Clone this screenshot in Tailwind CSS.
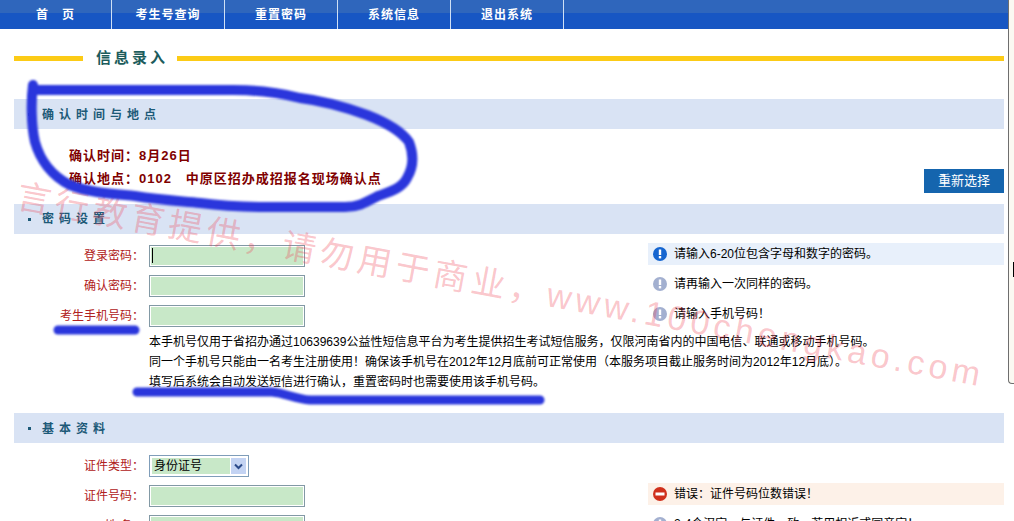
<!DOCTYPE html>
<html lang="zh-CN">
<head>
<meta charset="UTF-8">
<title>信息录入</title>
<script src="https://cdn.jsdelivr.net/npm/@tailwindcss/browser@4"></script>
</head>
<body class="bg-white">
<div class="relative w-[1014px] h-[521px] overflow-hidden bg-white text-[12px] text-black font-['Liberation_Sans','Noto_Sans_CJK_SC',sans-serif]">

	<!-- nav -->
	<div class="flex h-[29px] w-[1009px] bg-[linear-gradient(#2f66bc_0,#2f66bc_13px,#1756c3_13px)] text-white font-bold tracking-[1px]">
		<div class="w-[112px] flex items-center justify-center border-r border-[#cfe0f5] whitespace-pre">首   页</div>
		<div class="w-[113px] flex items-center justify-center border-r border-[#cfe0f5]">考生号查询</div>
		<div class="w-[113px] flex items-center justify-center border-r border-[#cfe0f5]">重置密码</div>
		<div class="w-[113px] flex items-center justify-center border-r border-[#cfe0f5]">系统信息</div>
		<div class="w-[113px] flex items-center justify-center border-r border-[#cfe0f5]">退出系统</div>
	</div>

	<div class="w-[1004px] pl-[14px]">
		<!-- page title -->
		<div class="flex items-center h-[20px] mt-[19px]">
			<div class="w-[69px] h-[5px] bg-[#fccb16]"></div>
			<div class="w-[94px] pl-[13px] text-[15px] font-bold tracking-[3px] text-[#1c5c5c]">信息录入</div>
			<div class="flex-1 h-[5px] bg-[#fccb16]"></div>
		</div>

		<!-- confirm -->
		<div class="flex items-center h-[30px] mt-[31px] pt-[1px] bg-[#d9e3f4] pl-[14px] font-bold tracking-[5px] text-[#1d5a78]">
			<span class="w-[3px] h-[3px] bg-[#1d5a78] mr-[11px]"></span>确认时间与地点
		</div>
		<div class="flex justify-between h-[75px]">
			<div class="pl-[55px] pt-[15px] text-[13px] leading-[23px] font-bold tracking-[1px] text-[#800000]">
				<div>确认时间：8月26日</div>
				<div class="whitespace-pre">确认地点：0102   中原区招办成招报名现场确认点</div>
			</div>
			<div class="w-[80px] h-[24px] mt-[40px] bg-[#1565ae] text-white text-[13px] flex items-center justify-center">重新选择</div>
		</div>

		<!-- password -->
		<div class="flex items-center h-[30px] bg-[#d9e3f4] pl-[14px] font-bold tracking-[5px] text-[#1d5a78]">
			<span class="w-[3px] h-[3px] bg-[#1d5a78] mr-[11px]"></span>密码设置
		</div>
		<div class="pt-[11px]">
			<div class="flex h-[30px]">
				<div class="w-[130px] h-[22px] leading-[22px] text-right text-[#b02020]">登录密码：</div>
				<div class="relative ml-[5px]">
					<input class="block w-[156px] h-[22px] border border-[#8299a5] bg-[#c8e8c8] shadow-[inset_0_0_0_1px_#fff]">
					<span class="absolute left-[3px] top-[3px] w-[1px] h-[15px] bg-black"></span>
				</div>
				<div class="flex items-center ml-auto w-[356px] h-[22px] -mt-[2px] pl-[5px] bg-[#e8f0fb]">
					<svg class="w-[14px] h-[14px] mr-[7px]" viewBox="0 0 14 14"><circle cx="7" cy="7" r="7" fill="#1565d0"/><rect x="5.8" y="2.5" width="2.4" height="5.5" fill="#fff"/><rect x="5.8" y="9" width="2.4" height="2.4" fill="#fff"/></svg>
					请输入6-20位包含字母和数字的密码。
				</div>
			</div>
			<div class="flex h-[30px]">
				<div class="w-[130px] h-[22px] leading-[22px] text-right text-[#b02020]">确认密码：</div>
				<input class="block ml-[5px] w-[156px] h-[22px] border border-[#8299a5] bg-[#c8e8c8] shadow-[inset_0_0_0_1px_#fff]">
				<div class="flex items-center ml-auto w-[356px] h-[22px] -mt-[2px] pl-[5px]">
					<svg class="w-[14px] h-[14px] mr-[7px]" viewBox="0 0 14 14"><circle cx="7" cy="7" r="7" fill="#a3b0d0"/><rect x="5.8" y="2.5" width="2.4" height="5.5" fill="#fff"/><rect x="5.8" y="9" width="2.4" height="2.4" fill="#fff"/></svg>
					请再输入一次同样的密码。
				</div>
			</div>
			<div class="flex h-[27px]">
				<div class="w-[130px] h-[22px] leading-[22px] text-right text-[#b02020]">考生手机号码：</div>
				<input class="block ml-[5px] w-[156px] h-[22px] border border-[#8299a5] bg-[#c8e8c8] shadow-[inset_0_0_0_1px_#fff]">
				<div class="flex items-center ml-auto w-[356px] h-[22px] -mt-[2px] pl-[5px]">
					<svg class="w-[14px] h-[14px] mr-[7px]" viewBox="0 0 14 14"><circle cx="7" cy="7" r="7" fill="#a3b0d0"/><rect x="5.8" y="2.5" width="2.4" height="5.5" fill="#fff"/><rect x="5.8" y="9" width="2.4" height="2.4" fill="#fff"/></svg>
					请输入手机号码！
				</div>
			</div>
			<div class="pl-[135px] leading-[20px] whitespace-nowrap">
				<div>本手机号仅用于省招办通过10639639公益性短信息平台为考生提供招生考试短信服务，仅限河南省内的中国电信、联通或移动手机号码。</div>
				<div>同一个手机号只能由一名考生注册使用！确保该手机号在2012年12月底前可正常使用（本服务项目截止服务时间为2012年12月底）。</div>
				<div>填写后系统会自动发送短信进行确认，重置密码时也需要使用该手机号码。</div>
			</div>
		</div>

		<!-- basic info -->
		<div class="flex items-center h-[30px] mt-[21px] pt-[1px] bg-[#d9e3f4] pl-[14px] font-bold tracking-[5px] text-[#1d5a78]">
			<span class="w-[3px] h-[3px] bg-[#1d5a78] mr-[11px]"></span>基本资料
		</div>
		<div class="pt-[12px]">
			<div class="flex h-[30px]">
				<div class="w-[130px] h-[22px] leading-[22px] text-right text-[#b02020]">证件类型：</div>
				<div class="flex items-center justify-between ml-[5px] w-[100px] h-[22px] border border-[#7f9db9] p-[2px]">
					<div class="w-[78px] h-[16px] leading-[16px] pl-[2px] bg-[#c8e8c8]">身份证号</div>
					<div class="flex items-center justify-center w-[15px] h-[16px] bg-[#c3d3f3]">
						<svg class="w-[9px] h-[7px]" viewBox="0 0 9 7"><path d="M1 1.5 4.5 5 8 1.5" fill="none" stroke="#2a4a8a" stroke-width="2"/></svg>
					</div>
				</div>
			</div>
			<div class="flex h-[30px]">
				<div class="w-[130px] h-[22px] leading-[22px] text-right text-[#b02020]">证件号码：</div>
				<input class="block ml-[5px] w-[156px] h-[22px] border border-[#8299a5] bg-[#c8e8c8] shadow-[inset_0_0_0_1px_#fff]">
				<div class="flex items-center ml-auto w-[356px] h-[22px] -mt-[2px] pl-[5px] bg-[#fdf1e8]">
					<svg class="w-[14px] h-[14px] mr-[7px]" viewBox="0 0 14 14"><circle cx="7" cy="7" r="7" fill="#d0301c"/><rect x="2.5" y="5.5" width="9" height="3" fill="#fff"/></svg>
					错误：证件号码位数错误！
				</div>
			</div>
			<div class="flex h-[30px]">
				<div class="w-[130px] h-[22px] leading-[22px] text-right text-[#b02020]">姓    名：</div>
				<input class="block ml-[5px] w-[156px] h-[22px] border border-[#8299a5] bg-[#c8e8c8] shadow-[inset_0_0_0_1px_#fff]">
				<div class="flex items-center ml-auto w-[356px] h-[22px] -mt-[2px] pl-[5px]">
					<svg class="w-[14px] h-[14px] mr-[7px]" viewBox="0 0 14 14"><circle cx="7" cy="7" r="7" fill="#a3b0d0"/><rect x="5.8" y="2.5" width="2.4" height="5.5" fill="#fff"/><rect x="5.8" y="9" width="2.4" height="2.4" fill="#fff"/></svg>
					2-4个汉字，与证件一致，若用相近或同音字！
				</div>
			</div>
		</div>
	</div>

	<!-- edge of the window behind -->
	<div class="absolute left-[1008px] top-0 w-[6px] h-[384px] bg-[#fbf9f2] border-l border-b border-[#6e6e6e] rounded-bl-[4px]">
		<div class="absolute left-[4px] top-[262px] w-[1px] h-[15px] bg-black"></div>
	</div>

	<!-- watermark -->
	<div class="absolute left-[21px] top-[176px] origin-top-left rotate-[10.5deg] whitespace-nowrap text-[34px] leading-[40px] tracking-[4.5px] text-[#f03c50]/30 pointer-events-none">言行教育提供，请勿用于商业，www.100chengkao.com</div>

	<!-- pen marks -->
	<svg class="absolute left-0 top-0 pointer-events-none blur-[1px]" width="1014" height="521" viewBox="0 0 1014 521" fill="none" stroke="#2a36dc" stroke-linecap="round" stroke-linejoin="round" stroke-width="10">
		<path d="M33 85 C31 100 31 125 35 142 C40 160 52 176 70 185 C90 193 115 194 135 196 C160 200 180 201 200 203 C230 207 250 207 267 207 L345 207 C360 207 368 201 378 196 C392 191 402 188 407 178 C413 168 414 155 409 142 C402 132 390 124 367 115 C345 107 325 101 300 98 C280 93 255 90 233 90 L33 90"/>
		<path stroke-width="9" d="M58 330 H135"/>
		<path stroke-width="9" d="M137 392 H272 C285 393 295 399 310 400 H540"/>
	</svg>
</div>
</body>
</html>
